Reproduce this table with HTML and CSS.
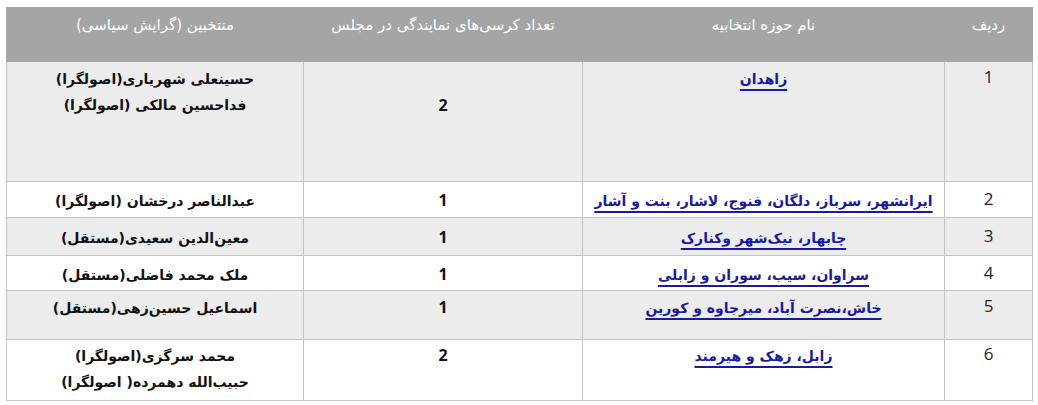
FILE: index.html
```html
<!DOCTYPE html>
<html lang="fa" dir="rtl">
<head>
<meta charset="utf-8">
<link rel="stylesheet" href="styles.css">
</head>
<body>
<table class="tbl">
  <colgroup>
    <col class="c-num">
    <col class="c-dist">
    <col class="c-seat">
    <col class="c-name">
  </colgroup>
  <thead>
    <tr class="head">
      <th>ردیف</th>
      <th>نام حوزه انتخابیه</th>
      <th>تعداد کرسی‌های نمایندگی در مجلس</th>
      <th>منتخبین (گرایش سیاسی)</th>
    </tr>
  </thead>
  <tbody>
    <tr class="r1 alt">
      <td class="num">1</td>
      <td class="dist"><a href="#">زاهدان</a></td>
      <td class="seat seat-mid">2</td>
      <td class="name">حسینعلی شهریاری(اصولگرا)<br>فداحسین مالکی (اصولگرا)</td>
    </tr>
    <tr class="r2">
      <td class="num">2</td>
      <td class="dist"><a href="#">ایرانشهر، سرباز، دلگان، فنوج، لاشار، بنت و آشار</a></td>
      <td class="seat">1</td>
      <td class="name">عبدالناصر درخشان (اصولگرا)</td>
    </tr>
    <tr class="r3 alt">
      <td class="num">3</td>
      <td class="dist"><a href="#">چابهار، نیک‌شهر وکنارک</a></td>
      <td class="seat">1</td>
      <td class="name">معین‌الدین سعیدی(مستقل)</td>
    </tr>
    <tr class="r4">
      <td class="num">4</td>
      <td class="dist"><a href="#">سراوان، سیب، سوران و زابلی</a></td>
      <td class="seat">1</td>
      <td class="name">ملک محمد فاضلی(مستقل)</td>
    </tr>
    <tr class="r5 alt">
      <td class="num">5</td>
      <td class="dist"><a href="#">خاش،نصرت آباد، میرجاوه و کورین</a></td>
      <td class="seat">1</td>
      <td class="name">اسماعیل حسین‌زهی(مستقل)</td>
    </tr>
    <tr class="r6">
      <td class="num">6</td>
      <td class="dist"><a href="#">زابل، زهک و هیرمند</a></td>
      <td class="seat">2</td>
      <td class="name">محمد سرگزی(اصولگرا)<br>حبیب‌الله دهمرده( اصولگرا)</td>
    </tr>
  </tbody>
</table>
</body>
</html>
```
FILE: styles.css
```css
html, body {
  margin: 0;
  padding: 0;
  background: #ffffff;
}
body {
  padding: 7px 5px 0 8px;
  font-family: "DejaVu Sans", "Noto Sans", sans-serif;
}
.tbl {
  border-collapse: collapse;
  table-layout: fixed;
  width: 1026px;
  direction: rtl;
}
.c-num { width: 88px; }
.c-dist { width: 362px; }
.c-seat { width: 279px; }
.c-name { width: 297px; }

.tbl th, .tbl td {
  border: 1px solid #c3c3c3;
  text-align: center;
  vertical-align: top;
  padding: 0;
  overflow: hidden;
}
.head th {
  background: #a5a5a5;
  color: #ffffff;
  font-weight: normal;
  font-size: 15px;
  height: 54px;
  padding-top: 8px;
  border-color: #a5a5a5;
  box-sizing: border-box;
}
.alt td { background: #ececec; }

.tbl td { padding-top: 4px; box-sizing: border-box; }
.r1 td { height: 120px; }
.r2 td { height: 36px; padding-top: 6px; }
.r3 td { height: 38px; padding-top: 7px; }
.r4 td { height: 35px; padding-top: 6px; }
.r5 td { height: 49px; padding-top: 4px; }
.r6 td { height: 61px; padding-top: 3px; }

.num {
  font-family: "Open Sans", "DejaVu Sans", sans-serif;
  font-size: 17px;
  color: #222;
  line-height: 22px;
}
.dist {
  font-size: 14px;
  font-weight: bold;
  line-height: 26px;
}
.dist a {
  color: #1a1a9c;
  text-decoration: underline;
  text-decoration-thickness: 1.5px;
  text-underline-offset: 5px;
  letter-spacing: -0.3px;
}
.seat {
  font-family: "Open Sans", "DejaVu Sans", sans-serif;
  font-weight: bold;
  font-size: 16px;
  color: #111;
  line-height: 24px;
}
.seat-mid { padding-top: 31px !important; }
.name {
  font-size: 14px;
  font-weight: 600;
  color: #111;
  line-height: 26px;
}
```
